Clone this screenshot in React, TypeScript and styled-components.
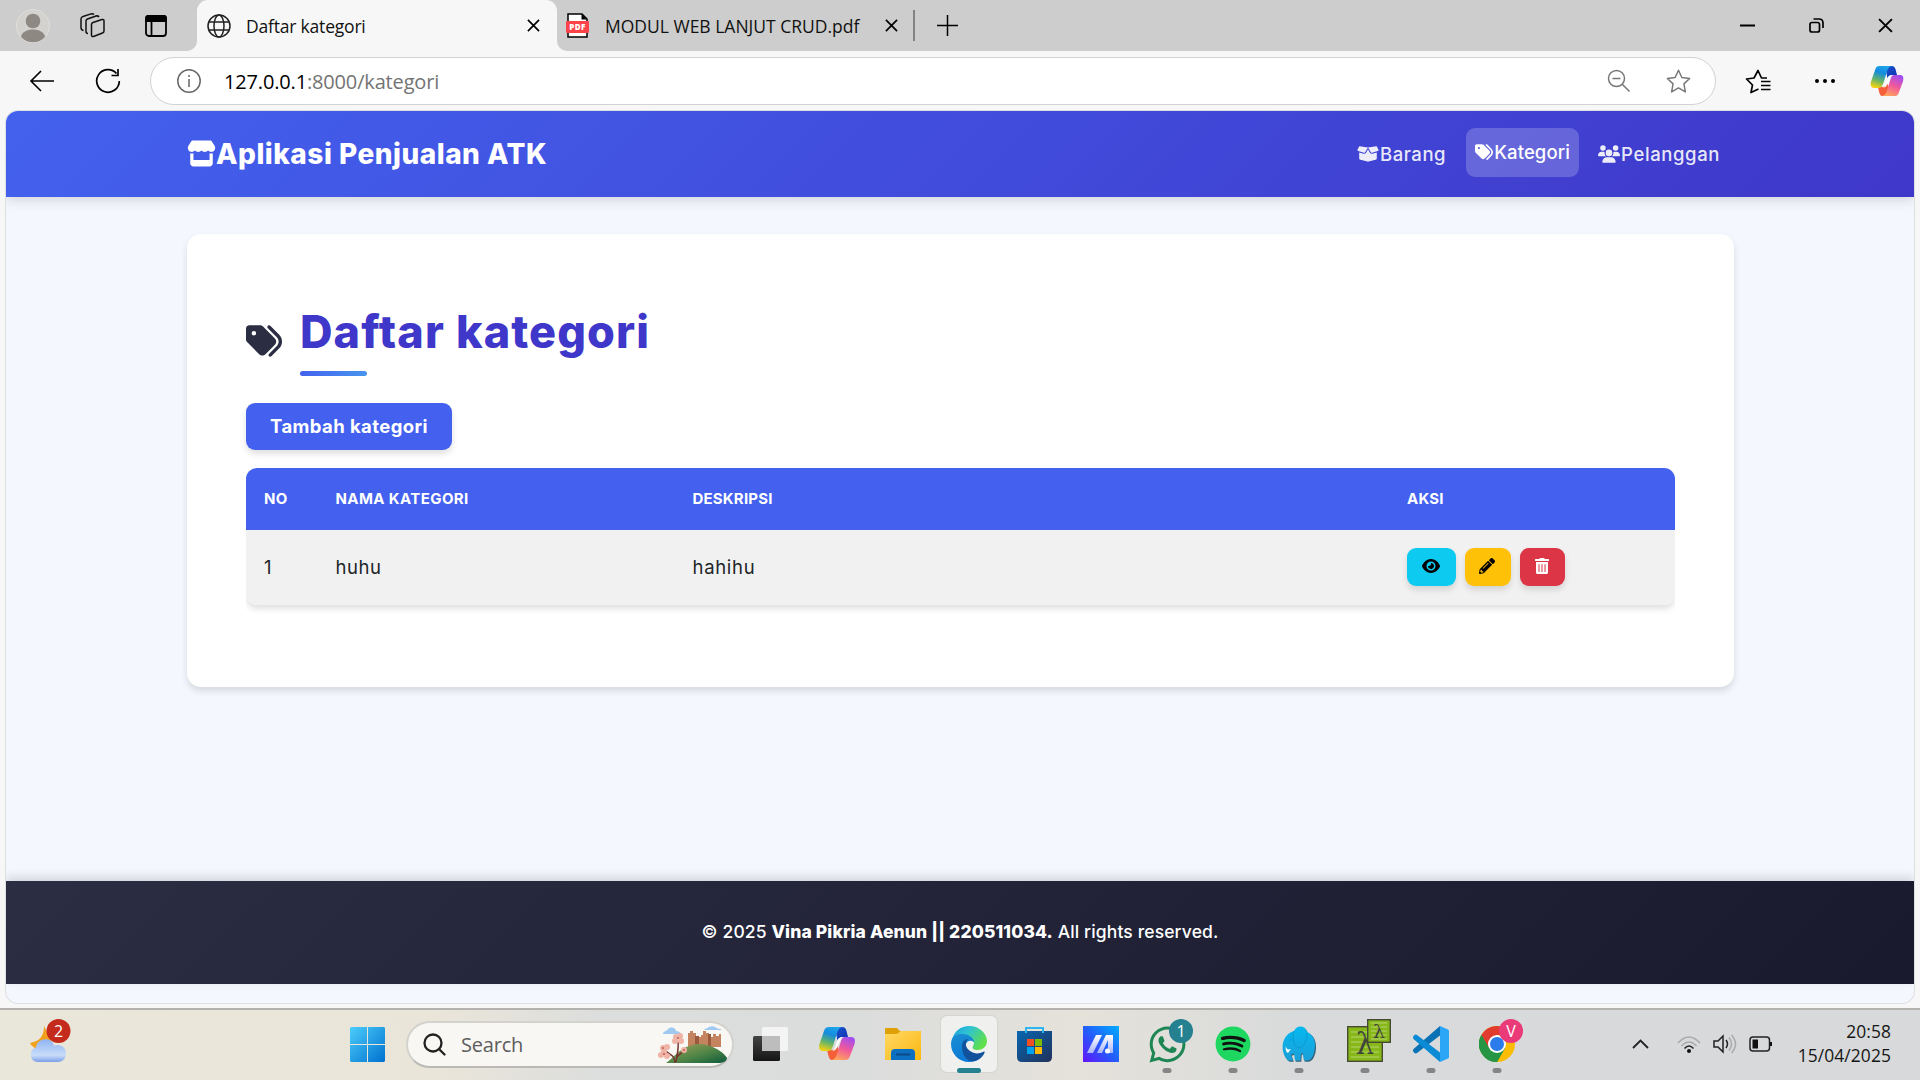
import React from 'react';
import styled, { createGlobalStyle, css } from 'styled-components';
import { FaStore, FaBoxOpen, FaTags, FaUsers, FaEye } from 'react-icons/fa6';
import { FaPencilAlt, FaTrashAlt, FaWhatsapp, FaSpotify } from 'react-icons/fa';

const ui = `"Open Sans", "Noto Sans", sans-serif`;
const web = `Inter, "Noto Sans", sans-serif`;

const Global = createGlobalStyle`
  * { box-sizing: border-box; }
  html, body { margin: 0; padding: 0; }
  body { width: 1920px; height: 1080px; overflow: hidden; background: #f7f7f7; font-family: ${ui}; }
  svg { display: block; flex: none; }
`;

const Screen = styled.div`
  width: 1920px;
  height: 1080px;
  display: flex;
  flex-direction: column;
  background: #f7f7f7;
`;

const Label = styled.span<{ $ls?: number }>`
  white-space: nowrap;
  letter-spacing: ${p => p.$ls ?? 0}px;
`;

/* ---------- Browser chrome ---------- */
const TabStrip = styled.div`
  height: 51px;
  display: flex;
  background: #f7f7f7;
`;
const StripStart = styled.div`
  width: 197px;
  display: flex;
  align-items: center;
  padding-left: 16px;
  background: #cdcdcd;
  border-bottom-right-radius: 10px;
`;
const Avatar = styled.div`
  margin-right: 30px;
`;
const StripIcon = styled.div`
  width: 65px;
`;
const ActiveTabBack = styled.div`
  width: 360px;
  background: #cdcdcd;
`;
const ActiveTab = styled.div`
  height: 51px;
  display: flex;
  align-items: center;
  padding: 0 17px 0 10px;
  gap: 15px;
  background: #f7f7f7;
  border-radius: 11px 11px 0 0;
  font-size: 17.5px;
  color: #111;
`;
const Grow = styled.div`
  flex: 1;
`;
const StripEnd = styled.div`
  flex: 1;
  display: flex;
  align-items: center;
  padding-left: 9px;
  background: #cdcdcd;
  border-bottom-left-radius: 10px;
  font-size: 17.5px;
  color: #111;
`;
const PdfLabel = styled(Label)`
  width: 296px;
  padding-left: 16px;
`;
const Divider = styled.div`
  width: 2px;
  height: 31px;
  background: #838383;
  margin: 0 22px 0 15px;
`;
const WindowControls = styled.div`
  display: flex;
  gap: 54px;
  margin-left: auto;
  padding-right: 27px;
`;
const Toolbar = styled.div`
  height: 60px;
  display: flex;
  align-items: center;
  padding: 0 16px 0 29px;
  background: #f7f7f7;
`;
const BackSlot = styled.div`
  width: 66px;
`;
const ReloadSlot = styled.div`
  width: 55px;
`;
const Address = styled.div`
  width: 1566px;
  height: 48px;
  display: flex;
  align-items: center;
  padding: 0 24px 0 26px;
  border: 1.5px solid #d2d2d2;
  border-radius: 24px;
  background: #fff;
  font-size: 20px;
  color: #737373;
`;
const Host = styled.b`
  font-weight: 400;
  color: #000;
`;
const Url = styled(Label)`
  padding-left: 23px;
`;
const AddressActions = styled.div`
  display: flex;
  gap: 35px;
  margin-left: auto;
`;
const ToolActions = styled.div`
  flex: 1;
  display: flex;
  align-items: center;
  padding-left: 29px;
`;
const MenuDots = styled.div`
  margin: 0 auto 0 43px;
`;

/* ---------- Web page ---------- */
const PageFrame = styled.div`
  height: 897px;
  padding: 0 6px 5px;
`;
const Page = styled.div`
  height: 892px;
  display: flex;
  flex-direction: column;
  overflow: hidden;
  background: #f4f7fe;
  border-radius: 12px;
  box-shadow: 0 0 0 1px #dedfe3;
  font-family: ${web};
`;
const Navbar = styled.header`
  height: 86px;
  display: flex;
  align-items: center;
  flex: none;
  padding: 0 194px 1px 181px;
  color: #fff;
  background: linear-gradient(135deg, #4361ee, #3f37c9);
  box-shadow: 0 3px 12px rgba(0, 0, 0, 0.14);
`;
const Brand = styled.div`
  display: flex;
  align-items: center;
  font-size: 28px;
  font-weight: 800;
`;
const Nav = styled.nav`
  display: flex;
  align-items: center;
  margin-left: auto;
`;
const NavItem = styled.a<{ $active?: boolean }>`
  height: 49px;
  display: flex;
  align-items: center;
  justify-content: center;
  gap: 1px;
  font-size: 18.5px;
  font-weight: 500;
  color: rgba(255, 255, 255, 0.9);
  border-radius: 9px;
  ${p => p.$active && css`
    width: 113px;
    margin: 0 19px 3px 20px;
    color: #fff;
    background: rgba(255, 255, 255, 0.2);
  `}
`;
const Card = styled.main`
  width: 1547px;
  height: 453px;
  margin: 37px 0 0 181px;
  padding: 59px 59px 0 59px;
  flex: none;
  border-radius: 14px;
  background: #fff;
  box-shadow: 0 4px 7px rgba(0, 0, 0, 0.12);
`;
const TitleRow = styled.div`
  display: flex;
  height: 92px;
  color: #2b2d42;
`;
const TitleIcon = styled.div`
  width: 54px;
  padding-top: 30px;
`;
const TitleBlock = styled.div`
  display: flex;
  flex-direction: column;
  justify-content: space-between;
  height: 83px;
`;
const Title = styled.h1`
  margin: 11px 0 0;
  font-size: 45px;
  line-height: 56px;
  font-weight: 800;
  color: #3f37c9;
`;
const Underline = styled.div`
  width: 67px;
  height: 5px;
  border-radius: 3px;
  background: linear-gradient(90deg, #4361ee, #4895ef);
`;
const AddButton = styled.button`
  width: 206px;
  height: 47px;
  margin: 18px 0;
  padding: 0 0 1px;
  display: flex;
  align-items: center;
  justify-content: center;
  border: 0;
  border-radius: 9px;
  background: #4361ee;
  color: #fff;
  font: 700 18.5px ${web};
  box-shadow: 0 4px 6px rgba(0, 0, 0, 0.12);
`;
const Table = styled.div`
  width: 1429px;
  overflow: hidden;
  padding-bottom: 9px;
`;
const TableBody = styled.div`
  overflow: hidden;
  border-radius: 11px;
`;
const TableShade = styled.div`
  border-radius: 11px;
  box-shadow: 0 4px 6px rgba(0, 0, 0, 0.12);
`;
const Row = styled.div<{ $head?: boolean }>`
  display: grid;
  grid-template-columns: 71.5px 357px 714.5px 1fr;
  align-items: center;
  height: 75px;
  padding: 0 18px 2px;
  background: #f1f1f1;
  color: #212529;
  font-size: 18.5px;
  ${p => p.$head && css`
    height: 62px;
    background: #4361ee;
    color: #fff;
    font-size: 15px;
    font-weight: 700;
  `}
`;
const Actions = styled.div`
  display: flex;
  gap: 9px;
`;
const tones = {
  view: { w: 49, bg: '#0dcaf0', fg: '#000' },
  edit: { w: 46, bg: '#ffc107', fg: '#000' },
  remove: { w: 45, bg: '#dc3545', fg: '#fff' },
};
const ActionButton = styled.button<{ $tone: keyof typeof tones }>`
  width: ${p => tones[p.$tone].w}px;
  height: 38px;
  padding: 0 2px 2px 0;
  display: flex;
  align-items: center;
  justify-content: center;
  border: 0;
  border-radius: 9px;
  background: ${p => tones[p.$tone].bg};
  color: ${p => tones[p.$tone].fg};
  box-shadow: 0 4px 6px rgba(0, 0, 0, 0.12);
`;
const Footer = styled.footer`
  height: 103px;
  margin: auto 0 19px;
  padding-bottom: 2px;
  display: flex;
  align-items: center;
  justify-content: center;
  flex: none;
  color: #fff;
  font-size: 17.5px;
  font-weight: 500;
  background: linear-gradient(135deg, #2b2d42, #1a1a2e);
  box-shadow: 0 -4px 10px rgba(0, 0, 0, 0.14);
  b { font-weight: 800; }
`;

/* ---------- Taskbar ---------- */
const Taskbar = styled.div`
  height: 72px;
  display: flex;
  align-items: center;
  padding: 0 29px 2px 20px;
  border-top: 2px solid #b3b2ae;
  background: linear-gradient(90deg, #e9e6da 0, #eae5d9 430px, #dcdedd 600px, #dbdcdc 860px, #e5e2da 1080px, #d8dadb 1300px, #d8d9da 1920px);
`;
const Weather = styled.div`
  width: 320px;
  padding-bottom: 11px;
`;
const StartSlot = styled.div`
  width: 66px;
  padding-left: 10px;
`;
const Search = styled.div`
  width: 328px;
  height: 47px;
  display: flex;
  align-items: center;
  padding: 0 4px 0 15px;
  border: 2px solid #d3d2cd;
  border-bottom-color: #bab9b5;
  border-radius: 24px;
  background: #f8f7f4;
  font-size: 20px;
  color: #5c5c5c;
`;
const SearchLabel = styled(Label)`
  flex: 1;
  padding-left: 15px;
`;
const Apps = styled.div`
  display: flex;
  padding-left: 9px;
  gap: 10px;
`;
const AppTile = styled.div<{ $open?: boolean; $active?: boolean }>`
  position: relative;
  width: 56px;
  height: 56px;
  display: flex;
  align-items: center;
  justify-content: center;
  border-radius: 6px;
  ${p => p.$active && css`
    background: #f0f0ee;
    box-shadow: 0 0 0 1px #d5d5d2;
  `}
  ${p => (p.$open || p.$active) && css`
    &::after {
      content: '';
      position: absolute;
      left: 50%;
      bottom: -1px;
      width: ${p.$active ? 24 : 9}px;
      height: 5px;
      border-radius: 3px;
      transform: translateX(-50%);
      background: ${p.$active ? '#25818f' : '#858585'};
    }
  `}
`;
const Badge = styled.span<{ $bg: string }>`
  position: absolute;
  top: 3px;
  right: 2px;
  width: 24px;
  height: 24px;
  border-radius: 50%;
  background: ${p => p.$bg};
  color: #fff;
  font-size: 16px;
  line-height: 24px;
  text-align: center;
`;
const SpotifyMark = styled(FaSpotify)`
  color: #1ed760;
  background: radial-gradient(circle, #111 60%, transparent 61%);
`;
const LambdaSlot = styled.div`
  padding: 0 0 7px 8px;
`;
const Tray = styled.div`
  display: flex;
  align-items: center;
  margin-left: auto;
`;
const TrayIcons = styled.div`
  display: flex;
  align-items: center;
  gap: 12px;
  margin: 0 23px 0 28px;
`;
const Clock = styled.div`
  width: 95px;
  padding-bottom: 2px;
  font-size: 17.4px;
  line-height: 24px;
  text-align: right;
  color: #161616;
`;

const Cross = ({ s = 13, w = 1.8 }: { s?: number; w?: number }) => (
  <svg width={s} height={s} viewBox="0 0 14 14" stroke="#000" strokeWidth={w} fill="none"><path d="M1 1l12 12M13 1L1 13" /></svg>
);

const Copilot = ({ w = 36, h = 34 }: { w?: number; h?: number }) => (
  <svg width={w} height={h} viewBox="0 0 36 34">
    <defs>
      <linearGradient id="cpA" x1=".6" y1="0" x2=".3" y2="1"><stop offset="0" stopColor="#1ea4e9" /><stop offset=".3" stopColor="#148bdf" /><stop offset=".65" stopColor="#62b36b" /><stop offset="1" stopColor="#f4d211" /></linearGradient>
      <linearGradient id="cpB" x1=".7" y1="0" x2=".3" y2="1"><stop offset="0" stopColor="#a24df0" /><stop offset=".5" stopColor="#f0599a" /><stop offset="1" stopColor="#ffa45c" /></linearGradient>
      <linearGradient id="cpC" x1="0" y1="0" x2="1" y2="1"><stop offset="0" stopColor="#1b56cf" /><stop offset="1" stopColor="#0e2fae" /></linearGradient>
    </defs>
    <path d="M16 0h7c3 0 4 2 4.500 4l1.500 6H24c-3 0-4.500 1-5.500 4z" fill="url(#cpC)" />
    <path d="M18 33h-5c-2 0-3-2-3.500-4L8 23h5c2 0 4-1 5-4l3 6z" fill="#f5603a" />
    <path d="M10 0h13c-3 1-4 3-5 6l-4 13c-1 3-2 5-5 5H4c-4 0-4.500-4-3.500-7L5 4c1-3 2-4 5-4z" fill="url(#cpA)" />
    <path d="M26 10h6c4 0 4.500 3 3.500 7L31 29c-1 3-2 4-5 4H13c3-1 4-3 5-6l4-13c1-3 2-4 4-4z" fill="url(#cpB)" />
    <path d="M23 10c-2.500.5-4 1.500-5 4.500l-2 6c-.7 2-1.500 3-3 3.500 2.500-.3 4-1 5.200-4z" fill="#fff" />
  </svg>
);

const Globe = () => (
  <svg width="24" height="24" viewBox="0 0 24 24" fill="none" stroke="#222" strokeWidth="1.500"><circle cx="12" cy="12" r="11" /><ellipse cx="12" cy="12" rx="5" ry="11" /><path d="M2 8h20M2 16h20" /></svg>
);

const PdfIcon = () => (
  <svg width="23" height="25" viewBox="0 0 23 25">
    <path d="M2 1h14l5 5v18H2z" fill="#fff" stroke="#000" strokeWidth="1.500" /><path d="M15.500 1v5.500H21z" fill="#000" />
    <rect y="8" width="23" height="12" rx="1" fill="#fb4349" />
    <text x="11.500" y="17" fontFamily="Open Sans" fontWeight="800" fontSize="8" letterSpacing=".5" fill="#fff" textAnchor="middle">PDF</text>
  </svg>
);

const WeatherIcon = () => (
  <svg width="60" height="48" viewBox="0 0 60 48">
    <defs><linearGradient id="wc" x1="0" y1="0" x2="0" y2="1"><stop offset="0" stopColor="#8fb4f3" /><stop offset=".7" stopColor="#c9dcfa" /><stop offset="1" stopColor="#7d9fe8" /></linearGradient></defs>
    <path d="M24 11c0 10-4 15-14 17 4 8 18 9 22-1z" fill="#f3a01e" />
    <path d="M17 47a7.500 7.500 0 0 1-1-14.500c1-10 16-11 18-2 7-2 12 2 12 8s-4 8.500-9 8.500z" fill="url(#wc)" />
    <circle cx="38.500" cy="16" r="12" fill="#c42b1c" />
    <text x="38.500" y="21.500" fontFamily="Open Sans" fontSize="16" fill="#fff" textAnchor="middle">2</text>
  </svg>
);

const CastleArt = () => (
  <svg width="70" height="38" viewBox="0 0 70 38">
    <defs><linearGradient id="hill" x1="0" y1="0" x2="1" y2="1"><stop offset="0" stopColor="#a8a05a" /><stop offset=".55" stopColor="#4f8546" /><stop offset="1" stopColor="#0f5a3c" /></linearGradient></defs>
    <path d="M5 9c0-3 4-3 5-5 3-3 8-1 8 2 4 0 5 3 5 3zM46 5c1-2 4-1.500 5-3 4-2 7 .5 8 1.500 3 0 5 1.500 5 1.500z" fill="#9fc9f0" />
    <path d="M30 8h2V6h3v2h3v4h5v-2h2V6h3v2h3v4h4V9h3v2h3V9h2v13H30z" fill="#c58460" />
    <path d="M37 11h4v11h-4zM50 9h3v13h-3z" fill="#9a5a40" />
    <path d="M8 38c8-5 15-18 32-19 13 0 26 8 29 14 0 3-4 5-9 5z" fill="url(#hill)" />
    <path d="M17 38c0-8-5-8-12-14M18 37c1-7 3-14 2-21M19 32c3-4 7-5 9-9" stroke="#75352f" strokeWidth="1.500" fill="none" />
    <g fill="#efb4a6">{[[5, 23], [3, 30], [9, 31], [18, 12], [22, 11], [23, 16], [17, 16], [6, 27], [26, 25], [9, 22]].map(([x, y], i) => <circle key={i} cx={x} cy={y} r="3" />)}</g>
    <g fill="#c85f5b">{[[5, 23], [6, 29], [20, 13], [26, 25]].map(([x, y], i) => <circle key={i} cx={x} cy={y} r="1.100" />)}</g>
  </svg>
);

const StartIcon = () => (
  <svg width="35" height="35" viewBox="0 0 35 35"><defs><linearGradient id="st" gradientUnits="userSpaceOnUse" x1="0" y1="0" x2="35" y2="35"><stop stopColor="#4ccdfb" /><stop offset="1" stopColor="#0071cf" /></linearGradient></defs><path d="M1 0h16v17H0V1zM18 0h16l1 1v16H18zM0 18h17v17H1l-1-1zM18 18h17v16l-1 1H18z" fill="url(#st)" /></svg>
);

const TaskView = () => (
  <svg width="36" height="36" viewBox="0 0 36 36"><defs><linearGradient id="tv" x1="0" y1="0" x2="0" y2="1"><stop stopColor="#444" /><stop offset="1" stopColor="#151515" /></linearGradient></defs><rect x="0" y="10" width="27" height="25" rx="1.500" fill="url(#tv)" /><rect x="9" y="1" width="26" height="24" rx="1.500" fill="#f4f4f4" /><path d="M9 10h18v15H9z" fill="#bdbdbd" /></svg>
);

const Explorer = () => (
  <svg width="36" height="34" viewBox="0 0 36 34"><defs><linearGradient id="ex" x1="0" y1="0" x2="1" y2="1"><stop stopColor="#ffd866" /><stop offset="1" stopColor="#fbb70f" /></linearGradient></defs><path d="M0 2q0-1 1-1h11l3 3h20q1 0 1 1v6H0z" fill="#dfa009" /><path d="M0 7h12l4-3h19q1 0 1 1v28H0z" fill="url(#ex)" /><path d="M6 33V26q0-4 4-4h16q4 0 4 4v7z" fill="#0b6fc2" /><path d="M11 27.500h14" stroke="#0c4a85" strokeWidth="2" /></svg>
);

const Edge = () => (
  <svg width="36" height="36" viewBox="0 0 36 36">
    <defs><linearGradient id="eg" x1="0" y1="0" x2="1" y2=".5"><stop stopColor="#1a9cdc" /><stop offset=".45" stopColor="#2fc2d4" /><stop offset="1" stopColor="#5fe04c" /></linearGradient><linearGradient id="eb" x1="0" y1="0" x2=".5" y2="1"><stop stopColor="#1b8fd2" /><stop offset="1" stopColor="#0a78d6" /></linearGradient></defs>
    <path d="M1 14C3 5 10 0 18 0c11 0 18 8 18 15 0 6-5 9-9 9-5 0-6-2-5-4 2-2 1-8-5-8z" fill="url(#eg)" />
    <path d="M0 18C0 10 6 8 11 8c8 0 12 5 12 8-6-4-10 2-8 8 2 8 9 10 13 9-2 2-6 3-10 3C8 36 0 28 0 18z" fill="url(#eb)" />
    <path d="M11 20c0-4 3-7 6-7-4 4-2 9 2 12 4 3 9 3 13 1 2-1 2 0 1 2-3 5-8 8-14 7-5-2-8-8-8-15z" fill="#12529d" />
  </svg>
);

const Store = () => (
  <svg width="36" height="36" viewBox="0 0 36 36"><defs><linearGradient id="ms" x1="0" y1="0" x2="1" y2="1"><stop stopColor="#0766b1" /><stop offset="1" stopColor="#22315a" /></linearGradient></defs><path d="M9 6V2h17v4" fill="none" stroke="#2cb5ee" strokeWidth="2" /><path d="M0 5h35v26q0 5-5 5H5q-5 0-5-5z" fill="url(#ms)" /><path d="M9 2v5M26 2v5" stroke="#2cb5ee" strokeWidth="2" /><path d="M10 13h7v7h-7z" fill="#f25022" /><path d="M18 13h7v7h-7z" fill="#7fba00" /><path d="M10 21h7v7h-7z" fill="#00a4ef" /><path d="M18 21h7v7h-7z" fill="#ffb900" /></svg>
);

const MyAsus = () => (
  <svg width="36" height="36" viewBox="0 0 36 36"><defs><linearGradient id="my" x1="0" y1="1" x2="1" y2="0"><stop stopColor="#6314fa" /><stop offset=".5" stopColor="#225ffa" /><stop offset="1" stopColor="#00adff" /></linearGradient><linearGradient id="mw" x1="0" y1="1" x2="0" y2="0"><stop stopColor="#a8b5fa" /><stop offset="1" stopColor="#fff" /></linearGradient></defs><path d="M0 0h36v36H0z" fill="url(#my)" /><path d="M4 27L13 9h6l-9 18zM14 27l9-18h7v18h-5V14l-6 13z" fill="url(#mw)" /><circle cx="24.500" cy="25" r="2.500" fill="#fff" /></svg>
);

const Elephant = () => (
  <svg width="34" height="36" viewBox="0 0 34 36">
    <defs><linearGradient id="el" x1="0" y1="0" x2="0" y2="1"><stop stopColor="#05b8f0" /><stop offset="1" stopColor="#1b9fd8" /></linearGradient></defs>
    <path d="M6 34.500C1 30-1 20 2 14 4 9 8 6 12 5c3-6 11-6 13 1 7 3 9 10 8 18-1 6-3 10-7 11h-4q-1-3-1-7h-2l-.5 7H13l-1-7-3 1 2 6H7z" fill="#35657e" transform="translate(.8 .8)" />
    <path d="M6 34.500C1 30-1 20 2 14 4 9 8 6 12 5c3-6 11-6 13 1 7 3 9 10 7.500 18-1 6-3 10-7 10.500H22q-1-3-1-7h-2l-.5 7H13l-1-7-3 1 2 6H7z" fill="url(#el)" />
    <path d="M12 5c-2 5-1 14 4 17 7-1 9-9 9-15M7 15c1-2 3-2 4 0" fill="none" stroke="#0a93cb" strokeWidth=".8" />
    <path d="M4 20c0 3 2 4 5 3l-3 4c-2-1-3-4-2-7z" fill="#fff" />
  </svg>
);

const Lambda = () => (
  <svg width="44" height="44" viewBox="0 0 44 44"><rect x=".7" y="7.700" width="34.600" height="34.600" fill="#88b71a" stroke="#474a32" strokeWidth="1.400" /><path d="M4 13h18M4 18h28M4 23h28M4 28h28M4 33h28M4 38h28" stroke="#b4d46c" /><text x="18" y="35" fontFamily="DejaVu Serif" fontSize="29" fill="#40443a" textAnchor="middle">λ</text><rect x="20.700" y=".7" width="22.600" height="22.600" fill="#88b71a" stroke="#474a32" strokeWidth="1.400" /><path d="M24 4h16M24 8h16M24 12h16M24 16h16M24 20h16" stroke="#b4d46c" /><text x="32" y="19" fontFamily="DejaVu Serif" fontSize="19" fill="#40443a" textAnchor="middle">λ</text></svg>
);

const Code = () => (
  <svg width="36" height="36" viewBox="0 0 36 36"><path d="M27 0v9.500L4 27q-1.500 1-3-.5l-.7-1q-.8-1.500.5-2.700z" fill="#0872b5" /><path d="M27 36v-9.500L4 9Q2.500 8 1 9.500l-.7 1q-.8 1.500.5 2.700z" fill="#0b8bd5" /><path d="M27 0l8 3.500q1 .5 1 1.500v26q0 1-1 1.500L27 36z" fill="#2ba5f5" /></svg>
);

const Chrome = () => (
  <svg width="36" height="36" viewBox="0 0 36 36"><circle cx="18" cy="18" r="18" fill="#fbbc05" /><path d="M18 18L2.400 9A18 18 0 0 0 18 36l8-14z" fill="#269544" /><path d="M2.400 9A18 18 0 0 1 33.600 9H18l-8 13z" fill="#e23c2f" /><path d="M2.400 9L10.500 23 18 27 25.800 22.500 18 36A18 18 0 0 1 2.400 9z" fill="#269544" /><circle cx="18" cy="18" r="9" fill="#fff" /><circle cx="18" cy="18" r="7" fill="#2b7bea" /></svg>
);

const star = 'M12 1.200l3.200 7 7.500.9-5.500 5.200 1.400 7.700-6.600-3.800L5.400 22l1.400-7.700L1.300 9.100l7.500-.9z';

export default function App() {
  return (
    <Screen>
      <Global />
      <TabStrip>
        <StripStart>
          <Avatar>
            <svg width="34" height="34" viewBox="0 0 34 34"><circle cx="17" cy="17" r="16.500" fill="#d4d2ce" stroke="#e0dfdc" /><circle cx="17" cy="12" r="7.300" fill="#8e8883" /><path d="M5 28c1-10 23-10 24 0-6 7-18 7-24 0z" fill="#8e8883" /></svg>
          </Avatar>
          <StripIcon>
            <svg width="25" height="25" viewBox="0 0 25 25" fill="none" stroke="#111" strokeWidth="1.500" strokeLinejoin="round"><path d="M13 9.500l9-3q2-.5 2 1.500V18q0 1.500-1.500 2l-9 3.500q-2 .5-2-1.500V11.500q0-1.500 1.500-2z" /><path d="M8 20.500q-2 0-2-2V8q0-1.500 1.500-2L16 3q2-.5 3 1M3.500 17.500Q1 17 1 14.500V6q0-2 2-2.500L11 .9q2-.4 3 .6" /></svg>
          </StripIcon>
          <svg width="22" height="22" viewBox="0 0 22 22" fill="none" stroke="#000" strokeWidth="1.800"><rect x="1" y="1" width="20" height="20" rx="3" /><path d="M1 3q0-2 2-2h16q2 0 2 2v3H1z" fill="#000" /><path d="M6.500 7v14" /></svg>
        </StripStart>
        <ActiveTabBack>
          <ActiveTab>
            <Globe />
            <Label $ls={-0.2}>Daftar kategori</Label>
            <Grow />
            <Cross />
          </ActiveTab>
        </ActiveTabBack>
        <StripEnd>
          <PdfIcon />
          <PdfLabel>MODUL WEB LANJUT CRUD.pdf</PdfLabel>
          <Cross />
          <Divider />
          <svg width="21" height="21" viewBox="0 0 21 21" stroke="#000" strokeWidth="1.500"><path d="M10.500 0v21M0 10.500h21" /></svg>
          <WindowControls>
            <svg width="15" height="15" viewBox="0 0 15 15" stroke="#000" strokeWidth="2"><path d="M0 7.500h15" /></svg>
            <svg width="15" height="15" viewBox="0 0 15 15" fill="none" stroke="#000" strokeWidth="1.700"><rect x="1" y="4.500" width="9.500" height="9.500" rx="2" /><path d="M4.500 1H10q4 0 4 4v5" /></svg>
            <Cross s={15} />
          </WindowControls>
        </StripEnd>
      </TabStrip>
      <Toolbar>
        <BackSlot><svg width="25" height="22" viewBox="0 0 25 22" fill="none" stroke="#000" strokeWidth="1.600"><path d="M25 11H2M12 1L2 11l10 10" /></svg></BackSlot>
        <ReloadSlot><svg width="26" height="26" viewBox="0 0 26 26" fill="none" stroke="#000" strokeWidth="1.700"><path d="M21.500 5.500A11.300 11.300 0 1 0 24.300 13M23 1v6.500h-6.500" /></svg></ReloadSlot>
        <Address>
          <svg width="24" height="24" viewBox="0 0 24 24" fill="none" stroke="#666" strokeWidth="1.500"><circle cx="12" cy="12" r="11.200" /><path d="M12 10v8M12 6v2" /></svg>
          <Url $ls={-0.16}><Host>127.0.0.1</Host>:8000/kategori</Url>
          <AddressActions>
            <svg width="24" height="24" viewBox="0 0 24 24" fill="none" stroke="#777" strokeWidth="1.500"><circle cx="9.500" cy="9.500" r="8" /><path d="M5.500 9.500h8M15 15l7.500 7.500" /></svg>
            <svg width="25" height="25" viewBox="0 0 24 24" fill="none" stroke="#777" strokeWidth="1.400" strokeLinejoin="round"><path d={star} /></svg>
          </AddressActions>
        </Address>
        <ToolActions>
          <svg width="26" height="25" viewBox="0 0 26 25" fill="none" stroke="#000" strokeWidth="1.700" strokeLinejoin="round"><path d="M13.500 20L6 23.500l1.500-7.500L1.500 10l7.500-1L13 1.500 16.500 9H22M16 12.500h9.500M16 16.500h9.500M16 20.500h9.500" /></svg>
          <MenuDots><svg width="22" height="6" viewBox="0 0 22 6"><circle cx="3" cy="3" r="2" /><circle cx="11" cy="3" r="2" /><circle cx="19" cy="3" r="2" /></svg></MenuDots>
          <Copilot w={34} h={31} />
        </ToolActions>
      </Toolbar>

      <PageFrame>
        <Page>
          <Navbar>
            <Brand><FaStore size={29} /><Label $ls={0.5}>Aplikasi Penjualan ATK</Label></Brand>
            <Nav>
              <NavItem><FaBoxOpen size={22} /><Label $ls={0.55}>Barang</Label></NavItem>
              <NavItem $active><FaTags size={18} /><Label $ls={0.1}>Kategori</Label></NavItem>
              <NavItem><FaUsers size={22} /><Label $ls={0.6}>Pelanggan</Label></NavItem>
            </Nav>
          </Navbar>
          <Card>
            <TitleRow>
              <TitleIcon><FaTags size={36} /></TitleIcon>
              <TitleBlock>
                <Title><Label $ls={1.1}>Daftar kategori</Label></Title>
                <Underline />
              </TitleBlock>
            </TitleRow>
            <AddButton><Label $ls={0.4}>Tambah kategori</Label></AddButton>
            <Table>
              <TableShade>
                <TableBody>
                  <Row $head><Label $ls={0.4}>NO</Label><Label $ls={0.4}>NAMA KATEGORI</Label><Label $ls={0.2}>DESKRIPSI</Label><Label $ls={0.2}>AKSI</Label></Row>
                  <Row>
                    <Label>1</Label><Label $ls={0.6}>huhu</Label><Label $ls={0.7}>hahihu</Label>
                    <Actions>
                      <ActionButton $tone="view"><FaEye size={18} /></ActionButton>
                      <ActionButton $tone="edit"><FaPencilAlt size={16} /></ActionButton>
                      <ActionButton $tone="remove"><FaTrashAlt size={16} /></ActionButton>
                    </Actions>
                  </Row>
                </TableBody>
              </TableShade>
            </Table>
          </Card>
          <Footer><Label $ls={0.13}>© 2025 <b>Vina Pikria Aenun || 220511034.</b> All rights reserved.</Label></Footer>
        </Page>
      </PageFrame>

      <Taskbar>
        <Weather><WeatherIcon /></Weather>
        <StartSlot><StartIcon /></StartSlot>
        <Search>
          <svg width="23" height="23" viewBox="0 0 23 23" fill="none" stroke="#222" strokeWidth="2.300" strokeLinecap="round"><circle cx="10" cy="10" r="8.500" /><path d="M16 16l5.500 5.500" /></svg>
          <SearchLabel $ls={-0.2}>Search</SearchLabel>
          <CastleArt />
        </Search>
        <Apps>
          <AppTile><TaskView /></AppTile>
          <AppTile><Copilot /></AppTile>
          <AppTile><Explorer /></AppTile>
          <AppTile $active><Edge /></AppTile>
          <AppTile><Store /></AppTile>
          <AppTile><MyAsus /></AppTile>
          <AppTile $open><FaWhatsapp size={41} color="#1d8653" /><Badge $bg="#25818f">1</Badge></AppTile>
          <AppTile $open><SpotifyMark size={36} /></AppTile>
          <AppTile $open><Elephant /></AppTile>
          <AppTile $open><LambdaSlot><Lambda /></LambdaSlot></AppTile>
          <AppTile $open><Code /></AppTile>
          <AppTile $open><Chrome /><Badge $bg="#ea3a78">V</Badge></AppTile>
        </Apps>
        <Tray>
          <svg width="17" height="10" viewBox="0 0 17 10" fill="none" stroke="#222" strokeWidth="1.800"><path d="M1 9l7.500-7.500L16 9" /></svg>
          <TrayIcons>
            <svg width="24" height="19" viewBox="0 0 24 19" fill="none" strokeWidth="1.500"><path d="M1 8q11-12 22 0M4.500 11q7.500-8 15 0" stroke="#aaa" /><path d="M7.500 13.500q4.500-5 9 0" stroke="#222" /><circle cx="12" cy="16" r="2" fill="#111" /></svg>
            <svg width="24" height="20" viewBox="0 0 24 20" fill="none" strokeWidth="1.500"><path d="M1 7h4l5-5v16l-5-5H1z" stroke="#222" /><path d="M13 6q3 4 0 8" stroke="#222" /><path d="M16 3.500q5 6.500 0 13M18.500 1q8 9 0 18" stroke="#aaa" /></svg>
            <svg width="24" height="16" viewBox="0 0 24 16" fill="none" stroke="#222" strokeWidth="1.500"><rect x="1" y="1" width="19.500" height="14" rx="3" /><path d="M3.500 3.500H9v9H3.500zM21 6h2v4h-2z" fill="#111" stroke="none" /></svg>
          </TrayIcons>
          <Clock><Label $ls={0.1}>20:58</Label><br /><Label $ls={0.1}>15/04/2025</Label></Clock>
        </Tray>
      </Taskbar>
    </Screen>
  );
}
